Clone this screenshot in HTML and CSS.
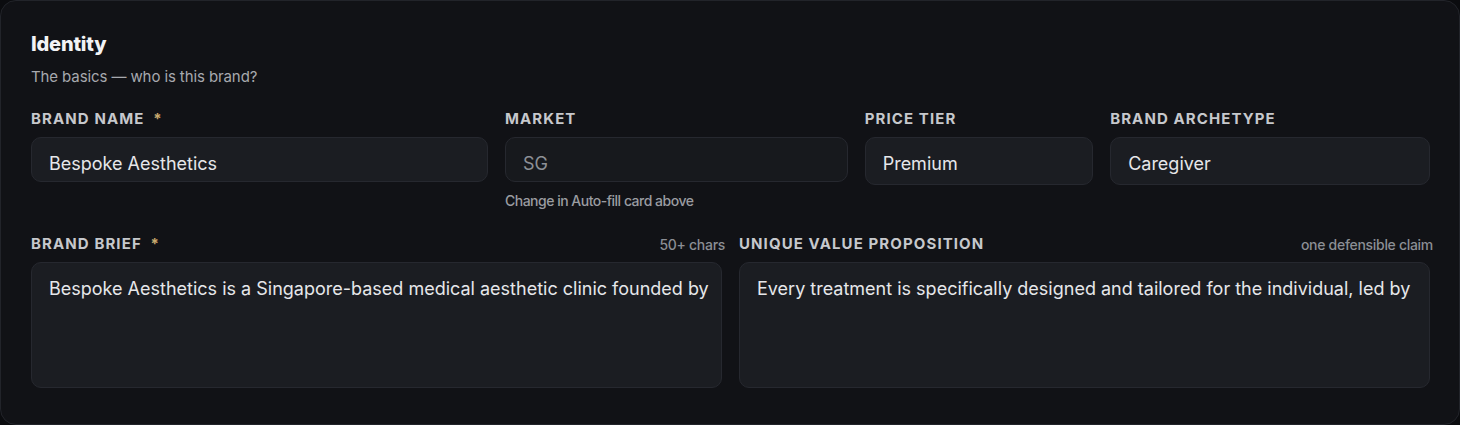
FILE: index.html
```html
<!DOCTYPE html>
<html lang="en">
<head>
  <meta charset="UTF-8">
  <meta name="viewport" content="width=device-width, initial-scale=1.0">
  <title>Identity</title>
  <link rel="stylesheet" href="styles.css">
</head>
<body>

  <div class="card">
    <h2 class="card-title">Identity</h2>
    <p class="card-sub">The basics — who is this brand?</p>

    <!-- Row 1: name, market, price tier, archetype -->
    <div class="row row-top">
      <div class="field">
        <div class="label">Brand Name <span class="req">*</span></div>
        <div class="input">Bespoke Aesthetics</div>
      </div>
      <div class="field">
        <div class="label">Market</div>
        <div class="input input-disabled">SG</div>
        <div class="hint">Change in Auto-fill card above</div>
      </div>
      <div class="field">
        <div class="label">Price Tier</div>
        <div class="input select">Premium</div>
      </div>
      <div class="field">
        <div class="label">Brand Archetype</div>
        <div class="input select">Caregiver</div>
      </div>
    </div>

    <!-- Row 2: brief and UVP -->
    <div class="row row-bottom">
      <div class="field">
        <div class="label-row">
          <div class="label">Brand Brief <span class="req">*</span></div>
          <span class="side-hint">50+ chars</span>
        </div>
        <div class="textarea">Bespoke Aesthetics is a Singapore-based medical aesthetic clinic founded by</div>
      </div>
      <div class="field">
        <div class="label-row">
          <div class="label">Unique Value Proposition</div>
          <span class="side-hint">one defensible claim</span>
        </div>
        <div class="textarea">Every treatment is specifically designed and tailored for the individual, led by</div>
      </div>
    </div>
  </div>

</body>
</html>
```

FILE: styles.css
```css
body {
  font-family: Inter, "Noto Sans", sans-serif;
  margin: 0;
  background-color: #0b0c0f;
  color: #e6e7ea;
}
.card {
  height: 425px;
  box-sizing: border-box;
  padding: 30px 29px 0 30px;
  background-color: #111216;
  border: 1px solid #22242a;
  border-radius: 16px;
}
.card-title {
  margin: 0;
  font-size: 20px;
  line-height: 26px;
  font-weight: 800;
  letter-spacing: -0.2px;
  color: #f2f3f5;
}
.card-sub {
  margin: 10px 0 0;
  font-size: 15px;
  line-height: 20px;
  letter-spacing: -0.1px;
  color: #a7a9ae;
}
.row {
  display: grid;
  gap: 17px;
}
.row-top {
  margin-top: 22px;
  grid-template-columns: 2fr 1.5fr 1fr 1.4fr;
}
.row-bottom {
  margin-top: 25px;
  grid-template-columns: 1fr 1fr;
}
.field {
  min-width: 0;
}
.label-row {
  display: flex;
  justify-content: space-between;
  align-items: center;
}
.label {
  font-size: 15px;
  line-height: 20px;
  font-weight: 700;
  letter-spacing: 1.1px;
  text-transform: uppercase;
  color: #c6c8cc;
  margin-bottom: 8px;
}
.req {
  color: #c9a96e;
  margin-left: 4px;
}
.side-hint {
  font-size: 14px;
  font-weight: 500;
  letter-spacing: -0.3px;
  color: #8b8e94;
  margin-bottom: 8px;
  margin-right: -3px;
}
.input {
  height: 45px;
  box-sizing: border-box;
  padding: 15px 17px 0;
  font-size: 18px;
  line-height: 22px;
  background-color: #1b1d22;
  border: 1px solid #26282f;
  border-radius: 10px;
  overflow: hidden;
  white-space: nowrap;
}
.select {
  height: 48px;
}
.input-disabled {
  background-color: #17191d;
  color: #8d9096;
}
.hint {
  margin-top: 11px;
  font-size: 14px;
  line-height: 16px;
  font-weight: 500;
  letter-spacing: -0.5px;
  color: #9a9ca1;
}
.textarea {
  height: 126px;
  box-sizing: border-box;
  padding: 15px 17px;
  font-size: 18px;
  line-height: 22px;
  background-color: #1b1d22;
  border: 1px solid #26282f;
  border-radius: 10px;
  overflow: hidden;
  white-space: nowrap;
}
```
